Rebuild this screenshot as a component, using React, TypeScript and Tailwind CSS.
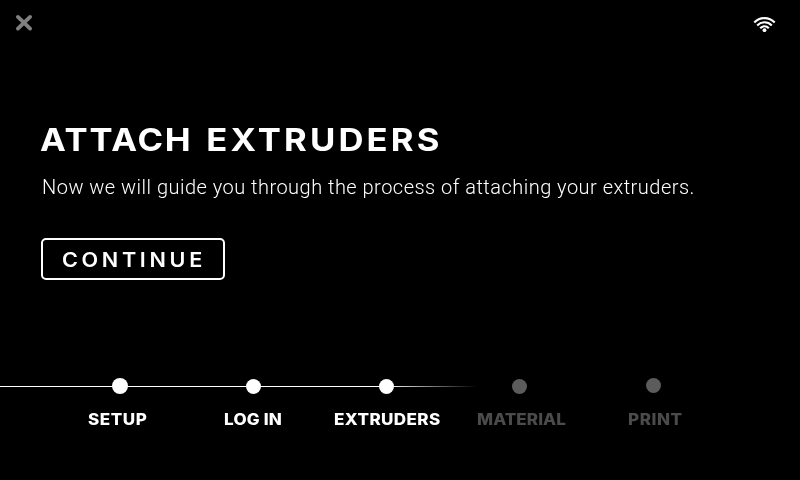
type Step = { label: string; dot: string; text: string };

const steps: Step[] = [
  { label: 'SETUP', dot: 'size-4 ml-[59px] bg-white', text: 'ml-[35px] tracking-[0.5px] text-white' },
  { label: 'LOG IN', dot: 'size-[15px] ml-[60px] bg-white', text: 'ml-[38px] tracking-[0.2px] text-white' },
  { label: 'EXTRUDERS', dot: 'size-[15px] ml-[60px] bg-white', text: 'ml-[15px] tracking-[0.35px] text-white' },
  { label: 'MATERIAL', dot: 'size-[15px] ml-[60px] bg-[#5c5c5c]', text: 'ml-[25px] tracking-[0.05px] text-[#4b4b4b]' },
  { label: 'PRINT', dot: 'size-[15px] ml-[61px] -mt-0.5 bg-[#5c5c5c]', text: 'ml-[43px] tracking-[0.5px] text-[#4b4b4b]' },
];

function CloseIcon() {
  return (
    <svg className="mt-[14px] ml-[15px] size-[18px]" viewBox="0 0 18 18" fill="none" stroke="#808080" strokeWidth="3.8">
      <path d="M2.9 2.9 15.1 14.6M15.1 2.9 2.9 14.6" strokeLinecap="round" />
    </svg>
  );
}

function WifiIcon() {
  return (
    <svg className="mt-4 mr-6 h-[17px] w-[23px]" viewBox="0 0 23 17" fill="none" stroke="white" strokeWidth="2.2">
      <path d="M1.3 6.4C7 .6 16 .6 21.7 6.4" />
      <path d="M4.2 9.4C8.3 5.2 14.7 5.2 18.8 9.4" />
      <path d="M7.2 12.2C9.6 9.6 13.4 9.6 15.8 12.2" />
      <circle cx="11.5" cy="14.2" r="1.9" fill="white" stroke="none" />
    </svg>
  );
}

export default function App() {
  return (
    <div className="flex h-[480px] w-[800px] flex-col overflow-hidden bg-black font-['Inter',sans-serif] text-white">
      <header className="flex h-[119px] shrink-0 items-start justify-between">
        <button aria-label="Close"><CloseIcon /></button>
        <WifiIcon />
      </header>
      <main className="flex h-[259px] shrink-0 flex-col items-start pl-[41px]">
        <h1 className="mt-px -ml-px flex h-10 origin-left scale-x-110 gap-[12.5px] text-[31.5px] leading-10 font-bold whitespace-nowrap will-change-transform">
          <span className="tracking-[1.6px]">ATTACH </span>
          <span className="tracking-[2.85px]">EXTRUDERS</span>
        </h1>
        <p className="mt-[15px] ml-[0.5px] h-6 font-['Roboto',sans-serif] text-[20px] leading-6 font-light tracking-[0.48px] whitespace-nowrap will-change-transform">
          Now we will guide you through the process of attaching your extruders.
        </p>
        <button className="mt-[39px] flex h-[42px] w-[184px] items-center rounded-[5px] border-2 border-white pt-[2px] pl-[19px] text-[20px] leading-6 font-semibold">
          <span className="origin-left scale-x-108 tracking-[3.4px] will-change-transform">CONTINUE</span>
        </button>
      </main>
      <footer className="flex flex-col">
        <div className="grid h-4">
          <div className="col-start-1 row-start-1 mt-2 flex h-px">
            <div className="w-[387px] bg-white" />
            <div className="w-[90px] bg-linear-to-r from-white to-transparent" />
          </div>
          <div className="col-start-1 row-start-1 grid grid-cols-[133px_133px_133px_133px_133px] items-center pl-[53px]">
            {steps.map((s) => (
              <div key={s.label} className={`rounded-full ${s.dot}`} />
            ))}
          </div>
        </div>
        <div className="mt-4 grid grid-cols-[133px_133px_133px_133px_133px] pl-[53px] text-[15.5px] leading-5 font-extrabold whitespace-nowrap">
          {steps.map((s) => (
            <span key={s.label} className={`origin-left scale-x-110 justify-self-start will-change-transform ${s.text}`}>{s.label}</span>
          ))}
        </div>
      </footer>
    </div>
  );
}
